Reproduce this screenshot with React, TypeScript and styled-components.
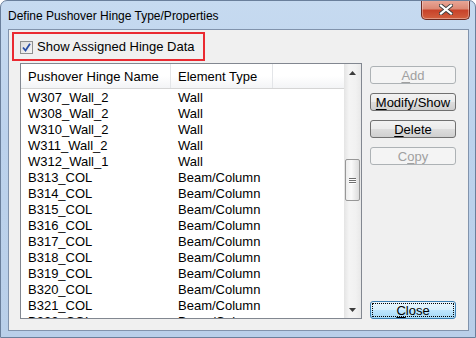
import React from "react";
import styled, { createGlobalStyle, css } from "styled-components";

const GlobalStyle = createGlobalStyle`
  html, body {
    margin: 0;
    padding: 0;
    width: 476px;
    height: 338px;
    overflow: hidden;
    background: #ffffff;
  }
`;

const UI_FONT = `"Liberation Sans", Arial, sans-serif`;

const Frame = styled.div`
  box-sizing: border-box;
  width: 476px;
  height: 338px;
  display: flex;
  flex-direction: column;
  border: 1px solid #6a7f9b;
  border-radius: 7px 7px 0 0;
  background: linear-gradient(180deg, #c6daf0 0%, #bcd2ec 40%, #b9cfe9 100%);
  padding: 0 6px 6px 7px;
  font-family: ${UI_FONT};
  overflow: hidden;
`;

const TitleBar = styled.div`
  height: 28px;
  flex: none;
  display: flex;
  align-items: flex-start;
  justify-content: space-between;
`;

const Title = styled.div`
  margin-top: 8px;
  font-size: 12px;
  color: #000;
`;

const CloseX = styled.div`
  width: 47px;
  height: 19px;
  margin-top: -1px;
  margin-right: -1px;
  border: 1px solid #6b2a22;
  border-top: none;
  border-radius: 0 0 5px 5px;
  background: linear-gradient(180deg, #e9a99a 0%, #dc8a76 45%, #c8432a 55%, #d2603f 100%);
  display: flex;
  align-items: center;
  justify-content: center;
  box-shadow: inset 0 0 0 1px rgba(255, 255, 255, 0.35);
`;

const Client = styled.div`
  flex: 1;
  min-height: 0;
  box-sizing: border-box;
  border: 1px solid #8193ac;
  background: #f0f0f0;
  display: flex;
  flex-direction: column;
  padding: 2px 0 11px 3px;
  font-family: ${UI_FONT};
  overflow: hidden;
`;

const Highlight = styled.div`
  box-sizing: border-box;
  flex: none;
  width: 193px;
  height: 29px;
  border: 2px solid #ea2a31;
  display: flex;
  align-items: center;
  padding-left: 6px;
  gap: 4px;
  font-size: 13px;
  color: #000;
`;

const CheckBox = styled.div`
  box-sizing: border-box;
  width: 13px;
  height: 13px;
  border: 1px solid #8e8f8f;
  background: linear-gradient(135deg, #dcdcdc 0%, #f6f6f6 100%);
  display: flex;
  align-items: center;
  justify-content: center;
  margin-top: 1px;
`;

const Body = styled.div`
  flex: 1;
  display: flex;
  margin-top: 2px;
  margin-left: 8px;
  min-height: 0;
`;

const ListView = styled.div`
  box-sizing: border-box;
  width: 342px;
  border: 1px solid #828790;
  background: #fff;
  display: flex;
  overflow: hidden;
`;

const ListMain = styled.div`
  flex: 1;
  display: flex;
  flex-direction: column;
  overflow: hidden;
`;

const HeaderRow = styled.div`
  height: 24px;
  flex: none;
  display: flex;
  background: linear-gradient(180deg, #ffffff 0%, #ffffff 50%, #f3f4f6 100%);
  border-bottom: 1px solid #d5d5d5;
`;

const HeaderCell = styled.div<{ w?: number }>`
  box-sizing: border-box;
  ${(p) => (p.w ? css`width: ${p.w}px;` : css`flex: 1;`)}
  padding-left: 7px;
  display: flex;
  align-items: center;
  font-size: 13px;
  color: #000;
  border-right: 1px solid #e3e5e8;
`;

const Row = styled.div`
  height: 16px;
  flex: none;
  display: flex;
  align-items: center;
  font-size: 13px;
  color: #000;
`;

const Cell = styled.div<{ w: number }>`
  width: ${(p) => p.w}px;
  padding-left: 7px;
  box-sizing: border-box;
  white-space: nowrap;
`;

const ScrollBar = styled.div`
  width: 17px;
  flex: none;
  display: flex;
  flex-direction: column;
  background: linear-gradient(90deg, #e4e4e4 0%, #f4f4f4 30%, #f1f1f1 70%, #e8e8e8 100%);
`;

const ArrowBtn = styled.div`
  height: 17px;
  flex: none;
  display: flex;
  align-items: center;
  justify-content: center;
`;

const Track = styled.div`
  flex: 1;
  display: flex;
  flex-direction: column;
  padding-top: 78px;
`;

const Thumb = styled.div`
  box-sizing: border-box;
  height: 42px;
  margin: 0 1px;
  border: 1px solid #979797;
  border-radius: 2px;
  background: linear-gradient(90deg, #ececec 0%, #fafafa 40%, #dcdcdc 100%);
  display: flex;
  flex-direction: column;
  align-items: center;
  justify-content: center;
  gap: 1px;
`;

const Grip = styled.div`
  width: 7px;
  height: 1px;
  background: #6e6e6e;
  box-shadow: 0 1px 0 #fff;
`;

const ButtonCol = styled.div`
  display: flex;
  flex-direction: column;
  margin-left: 8px;
  width: 86px;
  padding-top: 3px;
  gap: 9px;
`;

const Button = styled.div<{ disabled?: boolean; focused?: boolean }>`
  box-sizing: border-box;
  height: 18px;
  flex: none;
  display: flex;
  align-items: center;
  justify-content: center;
  border-radius: 3px;
  font-size: 13px;
  border: 1px solid #707070;
  color: #000;
  background: linear-gradient(180deg, #f2f2f2 0%, #ebebeb 48%, #dddddd 52%, #cfcfcf 100%);
  ${(p) =>
    p.disabled &&
    css`
      border-color: #adb2b5;
      color: #a0a0a0;
      background: #f4f4f4;
    `}
  ${(p) =>
    p.focused &&
    css`
      margin-top: auto;
      border-color: #3c7fb1;
      background: linear-gradient(180deg, #eaf6fd 0%, #d9f0fc 48%, #bee6fd 52%, #a7d9f5 100%);
      position: relative;
      &::after {
        content: "";
        position: absolute;
        inset: 1px;
        border: 1px dotted #000;
        border-radius: 1px;
      }
    `}
`;

const U = styled.span`
  text-decoration: underline;
  text-underline-offset: 2px;
`;

const rows: [string, string][] = [
  ["W307_Wall_2", "Wall"],
  ["W308_Wall_2", "Wall"],
  ["W310_Wall_2", "Wall"],
  ["W311_Wall_2", "Wall"],
  ["W312_Wall_1", "Wall"],
  ["B313_COL", "Beam/Column"],
  ["B314_COL", "Beam/Column"],
  ["B315_COL", "Beam/Column"],
  ["B316_COL", "Beam/Column"],
  ["B317_COL", "Beam/Column"],
  ["B318_COL", "Beam/Column"],
  ["B319_COL", "Beam/Column"],
  ["B320_COL", "Beam/Column"],
  ["B321_COL", "Beam/Column"],
  ["B322_COL", "Beam/Column"],
];

export default function App() {
  return (
    <>
      <GlobalStyle />
      <Frame>
        <TitleBar>
          <Title>Define Pushover Hinge Type/Properties</Title>
          <CloseX>
            <svg width="14" height="11" viewBox="0 0 14 11">
              <path
                d="M2 1.5 L12 9.5 M12 1.5 L2 9.5"
                stroke="#3d3d3d"
                strokeWidth="4"
                strokeLinecap="square"
              />
              <path
                d="M2 1.5 L12 9.5 M12 1.5 L2 9.5"
                stroke="#ffffff"
                strokeWidth="2.2"
                strokeLinecap="square"
              />
            </svg>
          </CloseX>
        </TitleBar>
        <Client>
          <Highlight>
            <CheckBox>
              <svg width="9" height="9" viewBox="0 0 9 9">
                <path d="M1 4.5 L3.5 7.5 L8 0.8" stroke="#2a4fa6" strokeWidth="1.8" fill="none" />
              </svg>
            </CheckBox>
            <span>Show Assigned Hinge Data</span>
          </Highlight>
          <Body>
            <ListView>
              <ListMain>
                <HeaderRow>
                  <HeaderCell w={150}>Pushover Hinge Name</HeaderCell>
                  <HeaderCell w={102}>Element Type</HeaderCell>
                  <HeaderCell style={{ borderRight: "none" }} />
                </HeaderRow>
                {rows.map(([name, type]) => (
                  <Row key={name}>
                    <Cell w={150}>{name}</Cell>
                    <Cell w={102}>{type}</Cell>
                  </Row>
                ))}
              </ListMain>
              <ScrollBar>
                <ArrowBtn>
                  <svg width="7" height="4" viewBox="0 0 7 4">
                    <path d="M0 4 L3.5 0 L7 4 Z" fill="#3c3c3c" />
                  </svg>
                </ArrowBtn>
                <Track>
                  <Thumb>
                    <Grip />
                    <Grip />
                    <Grip />
                  </Thumb>
                </Track>
                <ArrowBtn>
                  <svg width="7" height="4" viewBox="0 0 7 4">
                    <path d="M0 0 L7 0 L3.5 4 Z" fill="#3c3c3c" />
                  </svg>
                </ArrowBtn>
              </ScrollBar>
            </ListView>
            <ButtonCol>
              <Button disabled>
                <U>A</U>dd
              </Button>
              <Button>
                <U>M</U>odify/Show
              </Button>
              <Button>
                <U>D</U>elete
              </Button>
              <Button disabled>
                C<U>o</U>py
              </Button>
              <Button focused>
                <U>C</U>lose
              </Button>
            </ButtonCol>
          </Body>
        </Client>
      </Frame>
    </>
  );
}
